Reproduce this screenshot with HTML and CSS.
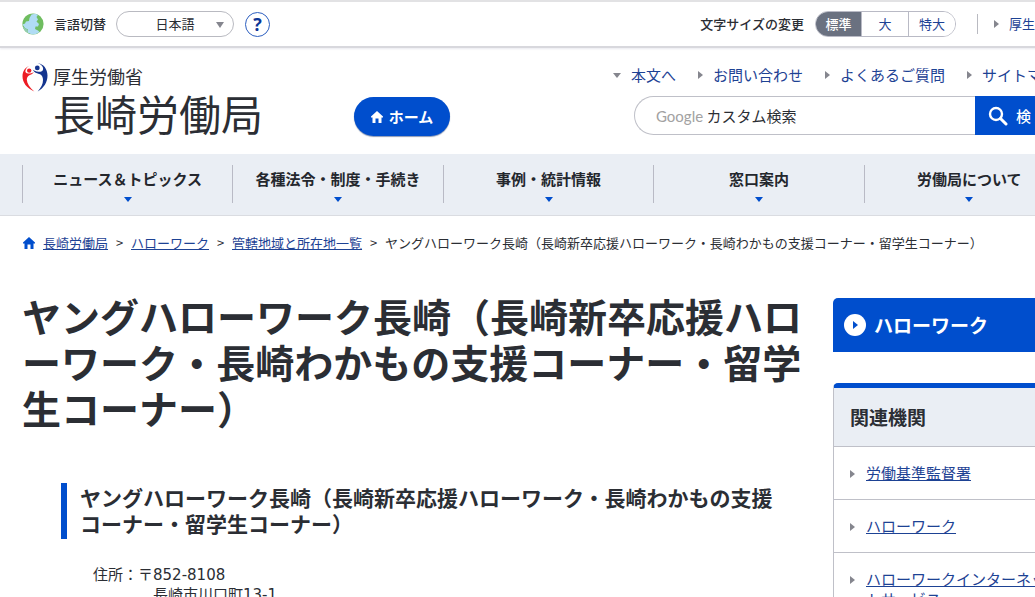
FILE: index.html
```html
<!DOCTYPE html>
<html lang="ja">
<head>
<meta charset="utf-8">
<title>ヤングハローワーク長崎 | 長崎労働局</title>
<link rel="stylesheet" href="styles.css">
</head>
<body>
<div class="page">
  <div class="topbar">
    <div class="language">
      <svg class="globe" viewBox="0 0 22 22" aria-hidden="true">
        <circle cx="11" cy="11" r="10.6" fill="#6fbd60"/>
        <path d="M9.500 1.500 13 .7 16 1.800 14.500 4l1.500 2.500-1.500 2L17 11l-1 2.500-2.500 0-.5 2.500 3 1.500 1.500 1.500-3.500 2-4 .4-4.500-1.800.5-3L3 15 .6 11.500 3 10.500l1-2L7 8l.5-3z" fill="#b0dcf4"/>
        <path d="M3 15 .8 13.500C1.500 16.500 3.500 19 5.800 20l0-3z" fill="#93cdb0"/>
      </svg>
      <label for="lang">言語切替</label>
      <span class="select-wrap"><select id="lang"><option>日本語</option></select></span>
      <button class="help" type="button" aria-label="ヘルプ">?</button>
    </div>
    <div class="tools">
      <span class="tools-label">文字サイズの変更</span>
      <div class="sizes">
        <button class="size is-active" type="button">標準</button>
        <button class="size" type="button">大</button>
        <button class="size" type="button">特大</button>
      </div>
      <a class="arrow-link ministry" href="#">厚生労働省</a>
    </div>
  </div>

  <header class="header">
    <div class="brand">
      <svg class="logo" viewBox="0 0 26 30" aria-hidden="true">
        <path d="M7.500 3.800C3 5.500.5 9.500.5 14.200c0 6 4 12 11.800 15.200C7.500 25.500 5 21.500 4.800 17.800c0-2 .8-3.300 2.200-4.300 2-1 3.500-1.500 5-3.500-2 1.200-3.500 1.500-5.500 1.500C4 11.500 2.800 10 3.600 8c.7-1.800 2-3.200 3.900-4.200z" fill="#ed1c24"/>
        <circle cx="7.200" cy="8.600" r="2.200" fill="#ed1c24"/>
        <path d="M15.500 1C21.500 1.800 25.500 7 25.500 13.500c0 6.500-3.500 12.500-9.800 16 3.500-4 5.300-7.500 5.300-11.500 0-2.500-.8-4.300-2.500-5.500-3-1-6-1.500-7.700-4.700 2.500 1.700 5 2 7.700 2 2-.3 3-1.800 2.500-4C20.300 3.500 18.500 2 15.500 1z" fill="#15358f"/>
        <circle cx="15.300" cy="5.900" r="2.400" fill="#15358f"/>
      </svg>
      <div class="brand-text">
        <span class="brand-ministry">厚生労働省</span>
        <span class="brand-name">長崎労働局</span>
      </div>
    </div>
    <a class="home" href="#">
      <svg viewBox="0 0 12 12" aria-hidden="true"><path d="M6 0 12 5.500v1H10.500V12H7.500V7.500h-3V12H1.500V6.500H0v-1z" fill="currentColor"/></svg>
      ホーム
    </a>
    <div class="header-side">
      <nav class="links">
        <a class="arrow-link down" href="#main">本文へ</a>
        <a class="arrow-link" href="#">お問い合わせ</a>
        <a class="arrow-link" href="#">よくあるご質問</a>
        <a class="arrow-link" href="#">サイトマップ</a>
      </nav>
      <form class="search">
        <div class="search-box">
          <label for="q"><span class="google">Google</span> カスタム検索</label>
          <input id="q" type="text">
        </div>
        <button type="submit">
          <svg viewBox="0 0 20 20" aria-hidden="true"><circle cx="8" cy="8" r="6" fill="none" stroke="currentColor" stroke-width="2.400"/><path d="m12.500 12.500 5.500 5.500" stroke="currentColor" stroke-width="3" stroke-linecap="round"/></svg>
          検 索
        </button>
      </form>
    </div>
  </header>

  <nav class="global">
    <a href="#">ニュース＆トピックス</a>
    <a href="#">各種法令・制度・手続き</a>
    <a href="#">事例・統計情報</a>
    <a href="#">窓口案内</a>
    <a href="#">労働局について</a>
  </nav>

  <nav class="crumbs">
    <svg viewBox="0 0 12 12" aria-hidden="true"><path d="M6 0 12 5.500v1H10.500V12H7.500V7.500h-3V12H1.500V6.500H0v-1z" fill="currentColor"/></svg>
    <a href="#">長崎労働局</a><span class="sep">&gt;</span>
    <a href="#">ハローワーク</a><span class="sep">&gt;</span>
    <a href="#">管轄地域と所在地一覧</a><span class="sep">&gt;</span>
    <span>ヤングハローワーク長崎（長崎新卒応援ハローワーク・長崎わかもの支援コーナー・留学生コーナー）</span>
  </nav>

  <div class="columns">
    <main id="main">
      <h1>ヤングハローワーク長崎（長崎新卒応援ハローワーク・長崎わかもの支援コーナー・留学生コーナー）</h1>
      <section class="office">
        <h2>ヤングハローワーク長崎（長崎新卒応援ハローワーク・長崎わかもの支援コーナー・留学生コーナー）</h2>
        <div class="address">
          <span>住所：</span>
          <p>〒852-8108<br><span class="street">長崎市川口町13-1</span></p>
        </div>
      </section>
    </main>
    <aside>
      <a class="side-title" href="#">
        <svg viewBox="0 0 22 22" aria-hidden="true"><circle cx="11" cy="11" r="11" fill="#fff"/><path d="m9 7 5 4-5 4z" fill="#004ecd"/></svg>
        ハローワーク
      </a>
      <section class="related">
        <h2>関連機関</h2>
        <ul>
          <li><a href="#">労働基準監督署</a></li>
          <li><a href="#">ハローワーク</a></li>
          <li><a href="#">ハローワークインターネットサービス</a></li>
        </ul>
      </section>
    </aside>
  </div>
</div>
</body>
</html>
```
FILE: styles.css
```css
* { box-sizing: border-box; }

html { scrollbar-width: none; }

body {
  margin: 0;
  overflow-x: hidden;
  background: #fff;
  color: #2b2e34;
  font-family: "Noto Sans CJK JP", sans-serif;
  font-size: 15px;
  line-height: 20px;
}

h1, h2, p, ul { margin: 0; padding: 0; }
ul { list-style: none; }
a { color: #1d4294; }
button, select, input { font: inherit; color: inherit; margin: 0; }
svg { display: block; flex: none; }

.page { min-width: 1096px; }

/* Top utility bar */
.topbar {
  display: flex;
  justify-content: space-between;
  height: 48px;
  padding: 0 22px;
  border-top: 2px solid #e2e2e4;
  border-bottom: 2px solid #d8d8dd;
  box-shadow: 0 1px 2px #e9e9ef;
  font-size: 13px;
}
.language, .tools { display: flex; align-items: center; }
.globe { width: 22px; height: 22px; margin-right: 10px; }
.language label, .tools-label { font-weight: 500; }
.select-wrap { position: relative; margin: 0 11px 0 10px; }
.select-wrap select {
  display: block;
  width: 118px;
  height: 26px;
  padding: 0;
  border: 1px solid #b9bac1;
  border-radius: 13px;
  background: #fff;
  appearance: none;
  text-align-last: center;
}
.select-wrap::after {
  content: "";
  position: absolute;
  top: 11px;
  right: 10px;
  border: 4px solid transparent;
  border-top: 6px solid #85868e;
  border-bottom: 0;
  pointer-events: none;
}
.help {
  width: 25px;
  height: 25px;
  padding: 0;
  border: 1px solid #2d5fc0;
  border-radius: 50%;
  background: #fff;
  color: #0b3596;
  font-family: "Open Sans", sans-serif;
  font-size: 18px;
  font-weight: 700;
  line-height: 22px;
}
.sizes {
  display: flex;
  margin: 0 21px 0 11px;
  overflow: hidden;
  border: 1px solid #b9bac5;
  border-radius: 13px;
}
.size {
  width: 47px;
  height: 24px;
  padding: 0;
  border: 0;
  border-left: 1px solid #b9bac5;
  background: #fff;
  color: #1d4294;
}
.size:first-child { width: 45px; border-left: 0; }
.size.is-active { background: #6a7180; color: #fff; font-weight: 500; }

.arrow-link {
  display: flex;
  align-items: center;
  gap: 10px;
  text-decoration: none;
}
.arrow-link::before, .related li::before {
  content: "";
  flex: none;
  border: 4px solid transparent;
  border-left: 5px solid #85868e;
  border-right: 0;
}
.arrow-link.down::before {
  border: 4px solid transparent;
  border-top: 5px solid #85868e;
  border-bottom: 0;
}
.ministry { padding-left: 16px; border-left: 1px solid #b9bac1; }

/* Header */
.header {
  display: flex;
  padding: 14px 22px;
}
.brand { display: flex; gap: 5px; width: 332px; }
.logo { width: 26px; height: 30px; }
.brand-text { display: flex; flex-direction: column; padding-top: 4px; }
.brand-ministry { font-size: 18px; line-height: 20px; }
.brand-name { font-size: 42px; line-height: 54px; }
.home {
  display: flex;
  align-items: center;
  justify-content: center;
  gap: 6px;
  width: 96px;
  height: 39px;
  margin-top: 35px;
  border-radius: 20px;
  background: #004ecd;
  box-shadow: 0 1px 1px #8c9ab5;
  color: #fff;
  font-weight: 700;
  text-decoration: none;
}
.home svg, .crumbs svg { width: 12px; height: 12px; }
.header-side {
  display: flex;
  flex-direction: column;
  gap: 11px;
  width: 462px;
  margin-left: auto;
  padding-top: 3px;
}
.links {
  display: flex;
  justify-content: flex-end;
  gap: 22px;
  padding-right: 2px;
}
.search { display: flex; height: 39px; margin-left: 22px; }
.search-box {
  display: flex;
  flex: 1;
  align-items: center;
  padding-left: 21px;
  border: 1px solid #bfc0c8;
  border-right: 0;
  border-radius: 20px 0 0 20px;
}
.google { color: #a2a2a2; font-family: Lato, sans-serif; }
.search-box input {
  flex: 1;
  min-width: 0;
  border: 0;
  background: transparent;
  outline: 0;
}
.search button {
  display: flex;
  align-items: center;
  gap: 8px;
  width: 99px;
  padding: 0 13px;
  border: 0;
  background: #004ecd;
  color: #fff;
  font-weight: 500;
}
.search button svg { width: 20px; height: 20px; }

/* Global navigation */
.global {
  display: flex;
  padding: 11px 22px 12px;
  border-bottom: 1px solid #dadce1;
  background: #eaeef4;
}
.global a {
  display: flex;
  flex: 1;
  flex-direction: column;
  align-items: center;
  gap: 8px;
  height: 38px;
  padding-top: 4px;
  border-left: 1px solid #b9bac5;
  color: #24272d;
  font-weight: 700;
  text-decoration: none;
}
.global a::after {
  content: "";
  border: 4px solid transparent;
  border-top: 5px solid #004ecd;
  border-bottom: 0;
}

/* Breadcrumbs */
.crumbs {
  display: flex;
  align-items: center;
  padding: 17px 23px;
  font-size: 13px;
  white-space: nowrap;
}
.crumbs svg { margin-right: 8px; color: #004ecd; }
.sep { width: 23px; text-align: center; }

/* Content */
.columns {
  display: grid;
  grid-template-columns: 1fr 241px;
  gap: 30px;
  padding: 22px 22px 32px;
}
h1 {
  font-size: 39px;
  line-height: 46px;
  line-break: anywhere;
}
.office { padding: 53px 16px 0 39px; }
.office h2 {
  padding: 1px 0 3px 13px;
  border-left: 6px solid #004ecd;
  font-size: 21px;
  line-height: 26px;
  line-break: anywhere;
}
.address {
  display: flex;
  padding: 26px 0 0 32px;
  font-family: "DejaVu Sans", "Noto Sans CJK JP", sans-serif;
}
.street { padding-left: 15px; }

/* Sidebar */
aside { padding-top: 6px; }
.side-title {
  display: flex;
  align-items: center;
  gap: 8px;
  height: 54px;
  padding: 0 11px;
  border-radius: 5px 5px 0 0;
  background: #004ecd;
  color: #fff;
  font-size: 19px;
  font-weight: 700;
  text-decoration: none;
}
.side-title svg { width: 22px; height: 22px; }
.related {
  margin-top: 31px;
  border: 1px solid #bfc0c8;
  border-top: 5px solid #004ecd;
  border-radius: 5px 5px 0 0;
}
.related h2 {
  padding: 16px;
  background: #eaeef4;
  font-size: 19px;
  line-height: 26px;
}
.related li {
  display: flex;
  align-items: flex-start;
  gap: 11px;
  padding: 16px;
  border-top: 1px solid #bfc0c8;
}
.related li::before { margin-top: 7px; }
.related a { line-break: anywhere; }
```
